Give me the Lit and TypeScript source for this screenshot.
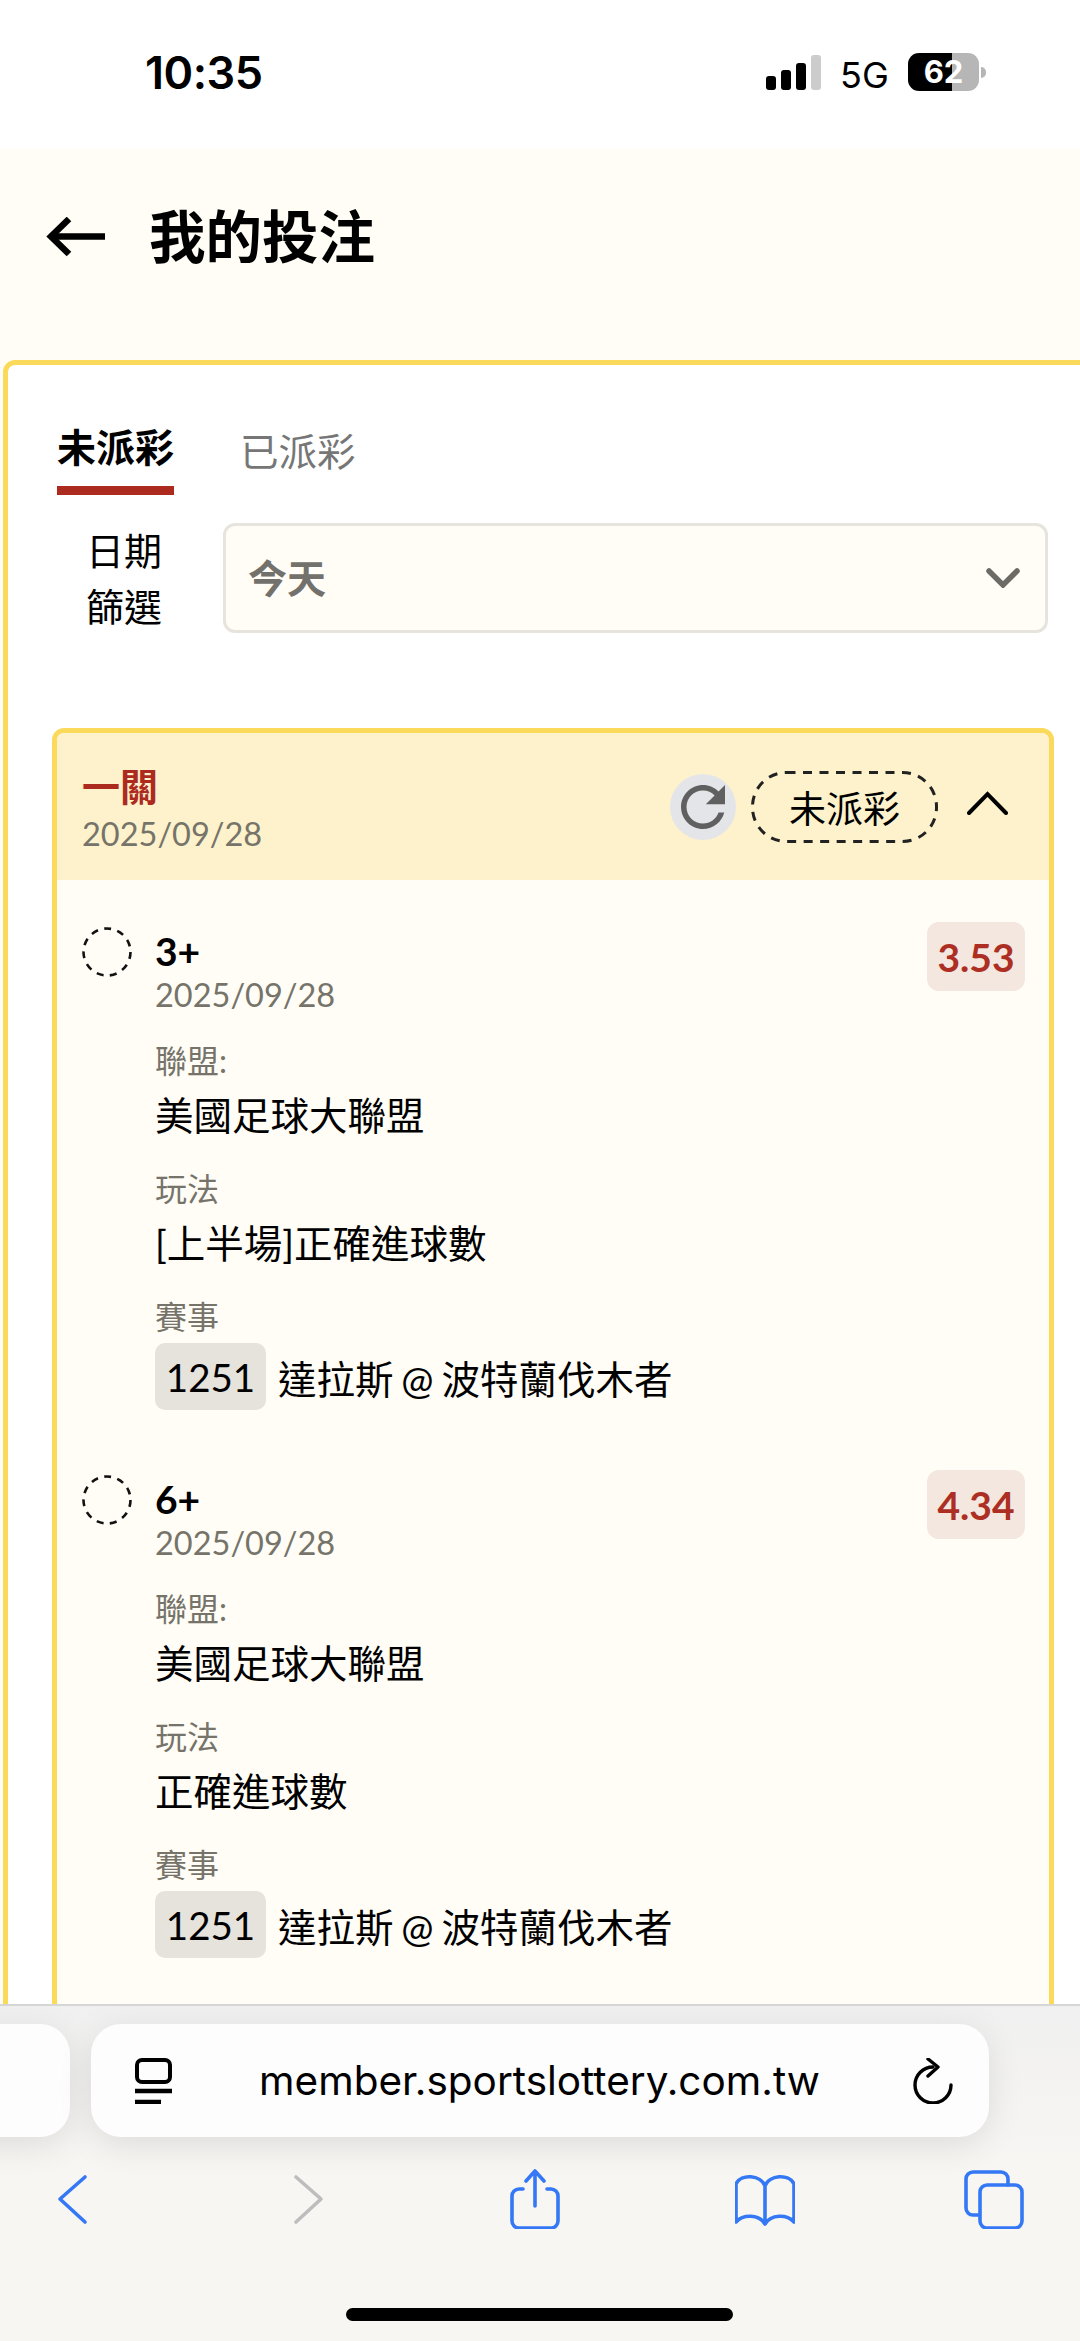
import { LitElement, html, css, svg } from 'lit';
import { customElement } from 'lit/decorators.js';

interface Bet {
  pick: string;
  odds: string;
  play: string;
}

const BETS: Bet[] = [
  { pick: '3+', odds: '3.53', play: '[上半場]正確進球數' },
  { pick: '6+', odds: '4.34', play: '正確進球數' },
];

const refreshPath = svg`<path d="M17.65 6.35C16.2 4.9 14.21 4 12 4c-4.42 0-7.99 3.58-7.99 8s3.57 8 7.99 8c3.73 0 6.84-2.55 7.73-6h-2.08c-.82 2.33-3.04 4-5.65 4-3.31 0-6-2.69-6-6s2.69-6 6-6c1.66 0 3.14.69 4.22 1.78L13 11h7V4l-2.35 2.35z"/>`;

@customElement('app-root')
export class AppRoot extends LitElement {
  static styles = css`
    :host {
      display: block;
      position: relative;
      width: 1080px;
      height: 2341px;
      overflow: hidden;
      background: #fffdf6;
      color: #000;
      font-family: Lato, 'Noto Sans CJK TC', sans-serif;
    }

    /* status bar */
    .status {
      height: 148px;
      box-sizing: border-box;
      background: #fff;
      display: flex;
      align-items: flex-start;
      padding: 48px 0 0 145px;
    }
    .time {
      font-family: Inter, sans-serif;
      font-size: 45px;
      font-weight: 600;
      line-height: 50px;
      letter-spacing: -0.5px;
      width: 621px;
    }
    .signal {
      margin-top: 7px;
      width: 55px;
      height: 35px;
    }
    .net {
      font-family: Inter, sans-serif;
      font-size: 36px;
      font-weight: 400;
      line-height: 40px;
      width: 68px;
      margin: 7px 0 0 19px;
      white-space: nowrap;
    }
    .battery {
      margin-top: 5px;
      width: 71px;
      height: 38px;
      border-radius: 11px;
      background: linear-gradient(90deg, #000 62%, #b6b6b6 62%);
      color: #fff;
      font-family: Inter, sans-serif;
      font-size: 31px;
      font-weight: 700;
      line-height: 38px;
      text-align: center;
    }
    .nub {
      margin: 19px 0 0 2px;
      width: 5px;
      height: 11px;
      border-radius: 0 5px 5px 0;
      background: #b6b6b6;
    }

    /* page title */
    .topbar {
      height: 212px;
      box-sizing: border-box;
      padding: 0 0 36px 46px;
      display: flex;
      align-items: center;
      gap: 44px;
    }
    .topbar h1 {
      margin: 0;
      font-size: 56.5px;
      font-weight: 700;
      line-height: 70px;
    }
    .back {
      width: 59px;
      height: 40px;
      margin-top: 2px;
    }

    /* outer panel, runs off the right edge of the screen */
    .panel {
      margin-left: 3px;
      width: 1100px;
      box-sizing: border-box;
      border: 5px solid #fbd95a;
      border-radius: 12px;
      background: #fff;
      padding: 59px 50px 0 27px;
    }
    .tabs {
      display: flex;
      gap: 66px;
      margin-left: 22px;
      font-size: 39px;
      line-height: 46px;
    }
    .tab {
      color: #767676;
      font-size: 38.5px;
      padding-top: 4px;
    }
    .tab.active {
      color: #000;
      font-size: 39px;
      font-weight: 700;
      padding: 0 0 16px;
      border-bottom: 9px solid #ad2a1f;
    }
    .filter {
      display: flex;
      gap: 10px;
      height: 110px;
      margin-top: 28px;
    }
    .filter label {
      width: 178px;
      font-size: 38px;
      line-height: 56px;
      text-align: center;
      align-self: center;
    }
    .select {
      flex: 1;
      height: 110px;
      box-sizing: border-box;
      border: 3px solid #e6e4dc;
      border-radius: 12px;
      background: #fffdf6;
      display: flex;
      align-items: center;
      justify-content: space-between;
      padding: 0 24px 4px 22px;
      color: #73716c;
      font-size: 39px;
      font-weight: 700;
    }
    .select svg {
      width: 36px;
      height: 20px;
      margin-top: 4px;
    }

    /* bet card */
    .card {
      margin: 95px -6px 0 17px;
      border: 5px solid #fbd95a;
      border-radius: 12px;
      background: #fffdf6;
      overflow: hidden;
    }
    .card-head {
      height: 147px;
      box-sizing: border-box;
      background: #fdf2cb;
      display: flex;
      align-items: center;
      padding: 0 41px 0 25px;
    }
    .card-title {
      color: #ad2a1f;
      font-size: 38px;
      font-weight: 700;
      line-height: 44px;
    }
    .date {
      color: #76746a;
      font-size: 32.5px;
      line-height: 44px;
    }
    .card-head .date {
      margin-top: 4px;
    }
    .head-left {
      flex: 1;
      padding-top: 6px;
    }
    .refresh {
      width: 66px;
      height: 66px;
      border-radius: 50%;
      background: #e4e5e8;
      display: flex;
      align-items: center;
      justify-content: center;
      margin-right: 15px;
    }
    .refresh svg {
      width: 66px;
      height: 66px;
      fill: #606060;
    }
    .pill {
      position: relative;
      width: 187px;
      height: 72px;
      display: flex;
      align-items: center;
      justify-content: center;
      font-size: 37px;
      margin-right: 29px;
    }
    .pill svg {
      position: absolute;
      inset: 0;
    }
    .up {
      width: 41px;
      height: 24px;
      margin-bottom: 8px;
    }
    .card-body {
      padding: 42px 24px 140px 25px;
      display: flex;
      flex-direction: column;
      gap: 60px;
    }
    .bet {
      display: flex;
      align-items: flex-start;
    }
    .radio {
      width: 50px;
      height: 50px;
      margin-top: 5px;
      margin-right: 23px;
      flex: none;
    }
    .bet-main {
      flex: 1;
      margin-top: 7px;
    }
    .pick {
      font-size: 39px;
      font-weight: 700;
      line-height: 44px;
    }
    .odds {
      width: 98px;
      height: 69px;
      border-radius: 12px;
      background: #f3e7e0;
      color: #ad2f24;
      font-size: 39px;
      font-weight: 700;
      display: flex;
      align-items: center;
      justify-content: center;
    }
    .field {
      margin-top: 29px;
    }
    .bet-main .date + .field {
      margin-top: 24px;
    }
    .field-label {
      color: #76746a;
      font-size: 32px;
      line-height: 40px;
    }
    .field-value {
      font-size: 38.5px;
      line-height: 50px;
      margin-top: 9px;
      white-space: nowrap;
    }
    .match {
      display: flex;
      align-items: center;
      gap: 12px;
      margin-top: 6px;
      font-size: 38.5px;
      word-spacing: -2px;
      white-space: nowrap;
    }
    .code {
      width: 111px;
      height: 67px;
      border-radius: 10px;
      background: #e5e3dc;
      display: flex;
      align-items: center;
      justify-content: center;
    }

    /* browser chrome, sits over the page */
    .chrome {
      position: absolute;
      left: 0;
      right: 0;
      bottom: 0;
      height: 337px;
      box-sizing: border-box;
      border-top: 2px solid #d6d6d6;
      background: linear-gradient(180deg, #f0f0f0 0%, #f7f6f3 50%);
      padding-top: 18px;
    }
    .bars {
      display: flex;
      gap: 21px;
      margin-left: -50px;
    }
    .side-pill,
    .url-pill {
      height: 113px;
      border-radius: 30px;
      background: #fdfdfd;
      box-shadow: 0 8px 34px rgba(0, 0, 0, 0.1);
    }
    .side-pill {
      width: 120px;
    }
    .url-pill {
      width: 898px;
      box-sizing: border-box;
      display: flex;
      align-items: center;
      padding: 0 36px 0 44px;
    }
    .url-pill svg {
      flex: none;
    }
    .url {
      flex: 1;
      padding-right: 6px;
      text-align: center;
      font-family: Inter, sans-serif;
      font-size: 40.5px;
      white-space: nowrap;
    }
    .nav {
      display: grid;
      grid-template-columns: 236px 227px 230px 229px 60px;
      padding-left: 42px;
      margin-top: 32px;
      height: 60px;
      align-items: center;
    }
    .nav svg {
      width: 60px;
      height: 60px;
      fill: none;
      stroke: #3478f6;
      stroke-width: 3.6;
      stroke-linecap: round;
      stroke-linejoin: round;
    }
    .nav svg.off {
      stroke: #bdbdbd;
    }
    .home {
      position: absolute;
      left: 346px;
      top: 302px;
      width: 387px;
      height: 13px;
      border-radius: 7px;
      background: #000;
    }
  `;

  private renderBet(b: Bet) {
    return html`
      <div class="bet">
        <svg class="radio" viewBox="0 0 50 50">
          <circle cx="25" cy="25" r="23.5" fill="none" stroke="#111" stroke-width="2.6" stroke-dasharray="7 6.4"/>
        </svg>
        <div class="bet-main">
          <div class="pick">${b.pick}</div>
          <div class="date">2025/09/28</div>
          <div class="field">
            <div class="field-label">聯盟:</div>
            <div class="field-value">美國足球大聯盟</div>
          </div>
          <div class="field">
            <div class="field-label">玩法</div>
            <div class="field-value">${b.play}</div>
          </div>
          <div class="field">
            <div class="field-label">賽事</div>
            <div class="match"><span class="code">1251</span><span>達拉斯 @ 波特蘭伐木者</span></div>
          </div>
        </div>
        <div class="odds">${b.odds}</div>
      </div>
    `;
  }

  render() {
    return html`
      <div class="status">
        <div class="time">10:35</div>
        <svg class="signal" viewBox="0 0 55 35">
          <rect x="0" y="21" width="10" height="14" rx="3"/>
          <rect x="15" y="15" width="10" height="20" rx="3"/>
          <rect x="30" y="8" width="10" height="27" rx="3"/>
          <rect x="45" y="0" width="10" height="35" rx="3" fill="#cccccc"/>
        </svg>
        <div class="net">5G</div>
        <div class="battery">62</div>
        <div class="nub"></div>
      </div>

      <div class="topbar">
        <svg class="back" viewBox="0 0 59 40" fill="none" stroke="#000" stroke-width="6.5">
          <path d="M59 19.5H6"/>
          <path d="M23 2 5 19.5 23 37"/>
        </svg>
        <h1>我的投注</h1>
      </div>

      <div class="panel">
        <div class="tabs">
          <div class="tab active">未派彩</div>
          <div class="tab">已派彩</div>
        </div>
        <div class="filter">
          <label>日期<br />篩選</label>
          <div class="select">
            <span>今天</span>
            <svg viewBox="0 0 36 20" fill="none" stroke="#6d6b66" stroke-width="5.5" stroke-linecap="round">
              <path d="M4 3l14 14L32 3"/>
            </svg>
          </div>
        </div>

        <div class="card">
          <div class="card-head">
            <div class="head-left">
              <div class="card-title">一關</div>
              <div class="date">2025/09/28</div>
            </div>
            <div class="refresh"><svg viewBox="0 0 24 24">${refreshPath}</svg></div>
            <div class="pill">
              <svg width="187" height="72" viewBox="0 0 187 72" fill="none" stroke="#222" stroke-width="3" stroke-dasharray="9 7.5">
                <rect x="1.5" y="1.5" width="184" height="69" rx="34"/>
              </svg>
              <span>未派彩</span>
            </div>
            <svg class="up" viewBox="0 0 41 24" fill="none" stroke="#000" stroke-width="4" stroke-linecap="round">
              <path d="M2 22 20.5 3 39 22"/>
            </svg>
          </div>
          <div class="card-body">${BETS.map((b) => this.renderBet(b))}</div>
        </div>
      </div>

      <div class="chrome">
        <div class="bars">
          <div class="side-pill"></div>
          <div class="url-pill">
            <svg width="37" height="46" viewBox="0 0 37 46" fill="none" stroke="#000" stroke-width="4">
              <rect x="2" y="2" width="33" height="22" rx="5"/>
              <path d="M0 33h37" stroke-width="4.5"/>
              <path d="M0 44h26" stroke-width="4.5"/>
            </svg>
            <div class="url">member.sportslottery.com.tw</div>
            <svg width="40" height="46" viewBox="0 0 40 46" fill="none" stroke="#000" stroke-width="3.4" stroke-linecap="round" stroke-linejoin="round">
              <path d="M20 9A18 18 0 1 0 38 27"/>
              <path d="M15 1l10 8-10 9"/>
            </svg>
          </div>
        </div>
        <div class="nav">
          <svg viewBox="0 0 60 60"><path d="M43 8 18 30 43 53"/></svg>
          <svg class="off" viewBox="0 0 60 60"><path d="M18 8 43 30 18 53"/></svg>
          <svg viewBox="0 0 60 60">
            <path d="M18 20h-4a7 7 0 0 0-7 7v25a7 7 0 0 0 7 7h32a7 7 0 0 0 7-7V27a7 7 0 0 0-7-7h-4"/>
            <path d="M30 37V2M21 12 30 2 39 12"/>
          </svg>
          <svg viewBox="0 0 60 60">
            <path d="M30 17C26 6 6 4 1 15V53C8 45 24 45 30 55 36 45 52 45 59 53V15C54 4 34 6 30 17ZM30 17V55"/>
          </svg>
          <svg viewBox="0 0 60 60">
            <path d="M14 46H9a7 7 0 0 1-7-7V10a7 7 0 0 1 7-7h28a7 7 0 0 1 7 7v6"/>
            <rect x="16" y="16" width="42" height="43" rx="7"/>
          </svg>
        </div>
        <div class="home"></div>
      </div>
    `;
  }
}
